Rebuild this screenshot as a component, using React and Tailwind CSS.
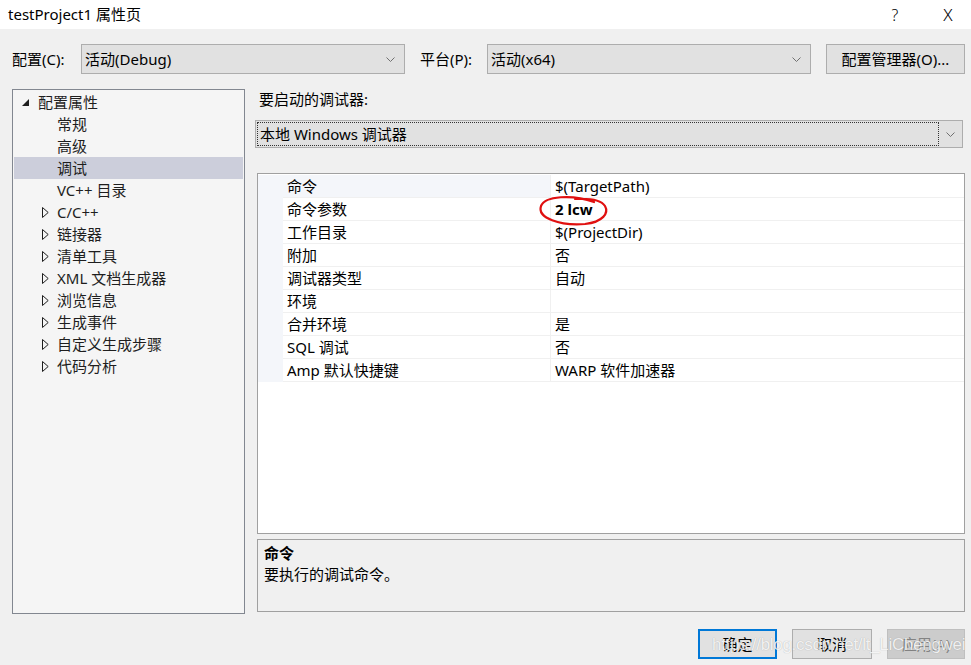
import React from 'react';

const FONT = { fontFamily: '"Noto Sans", "Noto Sans CJK SC", sans-serif' };

const tree = [
  { label: '配置属性', level: 0, open: true },
  { label: '常规', level: 1 },
  { label: '高级', level: 1 },
  { label: '调试', level: 1, selected: true },
  { label: 'VC++ 目录', level: 1 },
  { label: 'C/C++', level: 1, expandable: true },
  { label: '链接器', level: 1, expandable: true },
  { label: '清单工具', level: 1, expandable: true },
  { label: 'XML 文档生成器', level: 1, expandable: true },
  { label: '浏览信息', level: 1, expandable: true },
  { label: '生成事件', level: 1, expandable: true },
  { label: '自定义生成步骤', level: 1, expandable: true },
  { label: '代码分析', level: 1, expandable: true },
];

const props = [
  ['命令', '$(TargetPath)'],
  ['命令参数', '2 lcw', true],
  ['工作目录', '$(ProjectDir)'],
  ['附加', '否'],
  ['调试器类型', '自动'],
  ['环境', ''],
  ['合并环境', '是'],
  ['SQL 调试', '否'],
  ['Amp 默认快捷键', 'WARP 软件加速器'],
];

function Chevron() {
  return (
    <svg width="9" height="5" viewBox="0 0 9 5" className="shrink-0">
      <polyline points="0.5,0.5 4.5,4.5 8.5,0.5" fill="none" stroke="#707070" strokeWidth="1" />
    </svg>
  );
}

function Select({ value, className }) {
  return (
    <div className={`h-[30px] shrink-0 bg-[#e1e1e1] border border-[#adadad] flex items-center pl-[3px] pr-[9px] ${className}`}>
      <span className="flex-1 text-[15px] text-black whitespace-nowrap">{value}</span>
      <Chevron />
    </div>
  );
}

function TreeRow({ item }) {
  return (
    <div className={`h-[22px] flex items-center text-[15px] text-[#1e1e1e] whitespace-nowrap ${item.selected ? 'bg-[#cccedb]' : ''}`}>
      {item.level === 0 ? (
        <>
          <div className="w-[24px] flex justify-end pr-[9px]">
            <svg width="7" height="7" viewBox="0 0 7 7"><polygon points="7,0 7,7 0,7" fill="#1e1e1e" /></svg>
          </div>
          <span>{item.label}</span>
        </>
      ) : (
        <>
          <div className="w-[43px] flex justify-end pr-[8px]">
            {item.expandable && (
              <svg width="7" height="11" viewBox="0 0 7 11"><polygon points="0.5,0.5 6.2,5.5 0.5,10.5" fill="none" stroke="#1e1e1e" strokeWidth="1" /></svg>
            )}
          </div>
          <span>{item.label}</span>
        </>
      )}
    </div>
  );
}

export default function App() {
  return (
    <div className="w-[971px] h-[665px] bg-[#f0f0f0] flex flex-col relative overflow-hidden text-black" style={FONT}>
      {/* title bar */}
      <div className="h-[29px] shrink-0 bg-white flex items-center pl-[8px] text-[15px]">
        <span className="flex-1">testProject1 属性页</span>
        <span className="w-[60px] text-center text-[16px] font-light">?</span>
        <span className="w-[46px] text-center text-[17px] font-light">X</span>
      </div>

      {/* config row */}
      <div className="h-[45px] shrink-0 flex items-end pl-[12px] text-[15px] whitespace-nowrap">
        <div className="h-[30px] w-[69px] shrink-0 flex items-center">配置(C):</div>
        <Select value="活动(Debug)" className="w-[324px]" />
        <div className="h-[30px] w-[82px] shrink-0 flex items-center pl-[15px]">平台(P):</div>
        <Select value="活动(x64)" className="w-[324px]" />
        <button className="ml-[15px] w-[139px] h-[30px] shrink-0 bg-[#e1e1e1] border border-[#adadad] text-[15px]">配置管理器(O)...</button>
      </div>

      {/* main */}
      <div className="flex mt-[15px] h-[525px] shrink-0 pl-[12px] pr-[6px] gap-[12px]">
        <div className="w-[233px] bg-[#f5f5f5] border border-[#828790] p-[1px]">
          {tree.map((t) => <TreeRow key={t.label} item={t} />)}
        </div>

        <div className="flex-1 flex flex-col">
          <div className="h-[31px] pl-[2px] text-[15px] leading-[20px]">要启动的调试器:</div>
          <div className="h-[28px] bg-[#e1e1e1] border border-[#adadad] flex items-center -ml-[2px] mr-[2px]">
            <div className="flex-1 h-[24px] ml-[1px] border border-dotted border-[#333] flex items-center pl-[2px] text-[15px]">本地 Windows 调试器</div>
            <div className="w-[23px] flex justify-center"><Chevron /></div>
          </div>

          {/* property grid */}
          <div className="mt-[25px] h-[361px] bg-white border border-[#a0a0a0] flex flex-col pt-[1px]">
            {props.map(([name, value, bold], i) => (
              <div key={name} className="h-[23px] flex border-b border-[#f0f0f0] text-[15px]">
                <div className={`w-[292px] flex items-center pl-[29px] ${i === 0 ? 'bg-[#f4f6fa]' : 'bg-white'} relative`}>
                  <div className="absolute left-0 top-0 bottom-[-1px] w-[25px] bg-[#f4f6fa]" />
                  <span className="relative">{name}</span>
                </div>
                <div className="flex-1 flex items-center pl-[4px] border-l border-[#f0f0f0]">
                  <span className={bold ? 'font-bold' : ''}>{value}</span>
                </div>
              </div>
            ))}
          </div>

          {/* description */}
          <div className="mt-[5px] h-[73px] border border-[#a0a0a0] pl-[6px] pt-[2px] text-[15px]">
            <div className="font-bold h-[21px]">命令</div>
            <div>要执行的调试命令。</div>
          </div>
        </div>
      </div>

      {/* buttons */}
      <div className="flex justify-end gap-[15px] mt-[15px] pr-[6px] text-[15px]">
        <button className="w-[79px] h-[30px] bg-[#e1e1e1] border-2 border-[#0078d7]">确定</button>
        <button className="w-[80px] h-[30px] bg-[#e1e1e1] border border-[#adadad]">取消</button>
        <button className="w-[78px] h-[30px] bg-[#cccccc] border border-[#bfbfbf] text-[#838383]">应用(A)</button>
      </div>

      {/* red marker circle */}
      <svg className="absolute left-0 top-0 pointer-events-none" width="971" height="665">
        <path d="M594 202 C572 194 545 196 541 206 C537 218 560 226 585 224 C603 222 609 213 605 206 C601 200 590 198 575 199" fill="none" stroke="#e01010" strokeWidth="2.2" strokeLinecap="round" />
      </svg>

      {/* watermark */}
      <div className="absolute left-[712px] top-[632px] text-[17px] text-white/85 pointer-events-none tracking-[-0.3px]" style={{ fontFamily: '"Liberation Sans", Arial, sans-serif', textShadow: '0 0 1px rgba(0,0,0,0.3)' }}>
        https://blog.csdn.net/lt_LiChengwei
      </div>
    </div>
  );
}
